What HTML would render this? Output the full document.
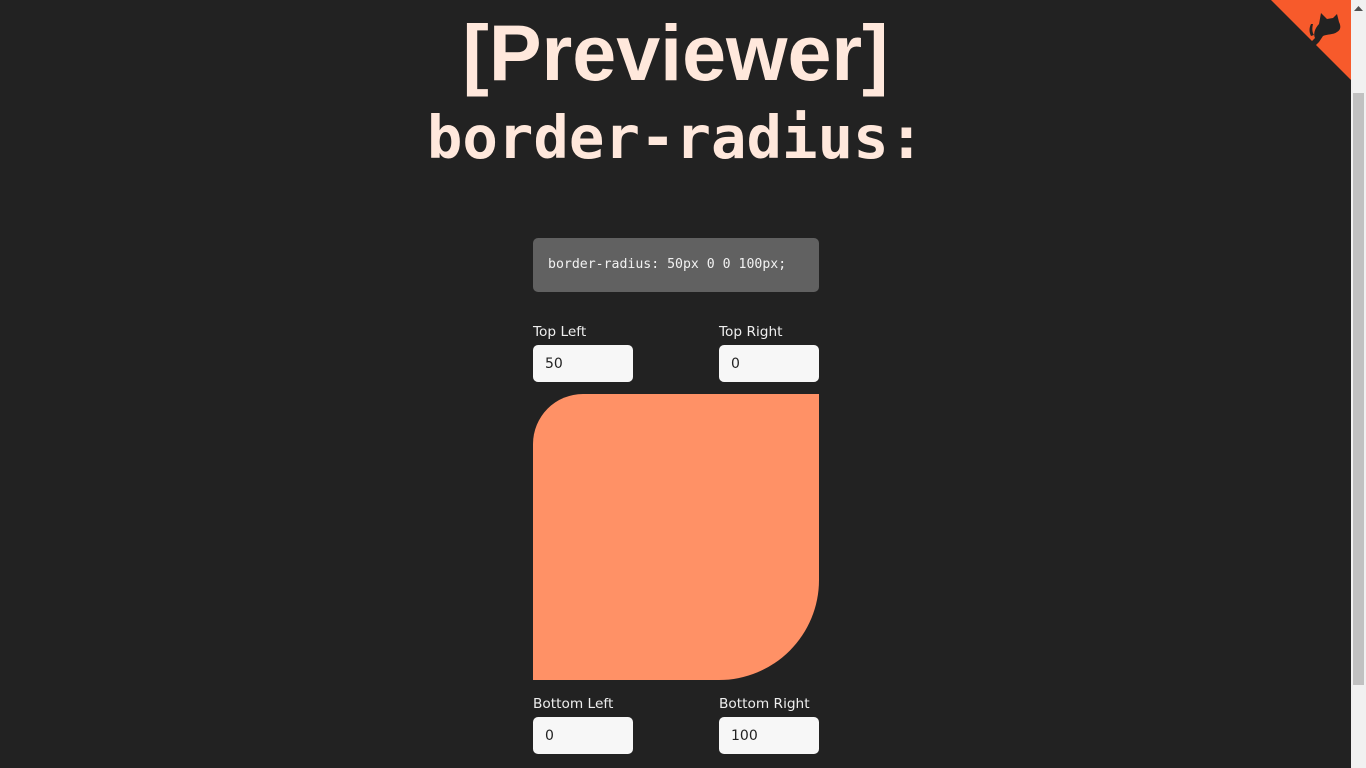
<!DOCTYPE html>
<html><head><meta charset="utf-8"><style>
html,body{margin:0;padding:0;background:#222;width:1366px;height:768px;overflow:hidden;}
.title{position:absolute;left:0;width:1351px;text-align:center;color:#ffe8dc;font-weight:bold;}
.t1{top:8px;font-family:"Liberation Sans",sans-serif;font-size:79px;line-height:90px;}
.t2{top:100px;font-family:"DejaVu Sans Mono",monospace;font-size:59px;line-height:76px;}
.code{position:absolute;left:533px;top:238px;width:286px;height:54px;background:#616161;border-radius:5px;color:#f2f2f2;font-family:"DejaVu Sans Mono",monospace;font-size:13.2px;line-height:54px;box-sizing:border-box;padding-left:15px;}
.lbl{position:absolute;color:#eee;font-family:"DejaVu Sans","Liberation Sans",sans-serif;font-size:13.7px;}
.inp{position:absolute;width:100px;height:37px;background:#f7f7f7;border-radius:5px;font-family:"DejaVu Sans",sans-serif;font-size:14px;line-height:39px;box-sizing:border-box;padding-left:12px;color:#222;}
.box{position:absolute;left:533px;top:394px;width:286px;height:286px;background:#ff9166;border-radius:50px 0 100px 0;}
.sb{position:absolute;left:1351px;top:0;width:15px;height:768px;background:#f1f1f1;}
.thumb{position:absolute;left:1353px;top:93px;width:11px;height:592px;background:#c1c1c1;}
</style></head><body>
<div class="title t1">[Previewer]</div>
<div class="title t2">border-radius:</div>
<div class="code">border-radius: 50px 0 0 100px;</div>
<div class="lbl" style="left:533px;top:324px">Top Left</div>
<div class="lbl" style="left:719px;top:324px">Top Right</div>
<div class="inp" style="left:533px;top:345px">50</div>
<div class="inp" style="left:719px;top:345px">0</div>
<div class="box"></div>
<div class="lbl" style="left:533px;top:696px">Bottom Left</div>
<div class="lbl" style="left:719px;top:696px">Bottom Right</div>
<div class="inp" style="left:533px;top:717px">0</div>
<div class="inp" style="left:719px;top:717px">100</div>
<svg style="position:absolute;left:1271px;top:0" width="80" height="80" viewBox="0 0 80 80">
<polygon points="0,0 80,0 80,80" fill="#f75a2b"/>
<path d="M38 44 L44 38 C42 34 44 28 48 24 L50 13 L56 19 L62 18 L66 14 L68 22 C70 26 70 30 66 32 C62 35 56 34 52 36 L48 42 L44 46 Z M40 36 C38 32 38 28 40 24 L42 24 C41 28 41 32 43 35 Z" fill="#222"/>
</svg>
<div class="sb"></div>
<svg style="position:absolute;left:1353px;top:4px" width="11" height="8"><polygon points="1,7 5.5,2 10,7" fill="#505050"/></svg>
<div class="thumb"></div>
</body></html>
